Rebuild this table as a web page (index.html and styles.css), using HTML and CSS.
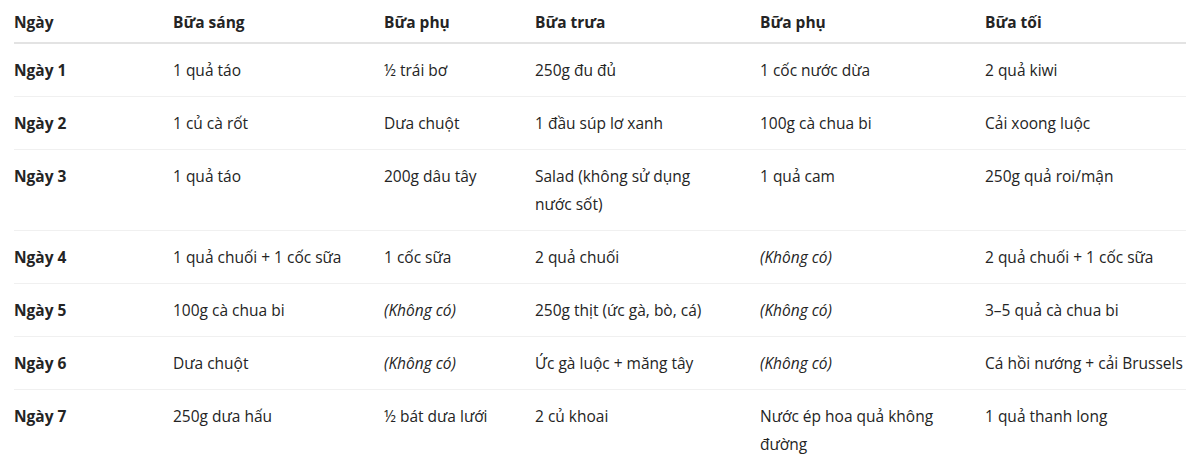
FILE: index.html
```html
<!DOCTYPE html>
<html lang="vi">
<head>
<meta charset="utf-8">
<link rel="stylesheet" href="styles.css">
</head>
<body>
<table class="menu">
  <colgroup>
    <col class="c1"><col class="c2"><col class="c3"><col class="c4"><col class="c5"><col class="c6">
  </colgroup>
  <thead>
    <tr><th>Ngày</th><th>Bữa sáng</th><th>Bữa phụ</th><th>Bữa trưa</th><th>Bữa phụ</th><th>Bữa tối</th></tr>
  </thead>
  <tbody>
    <tr><td class="day">Ngày 1</td><td>1 quả táo</td><td>½ trái bơ</td><td>250g đu đủ</td><td>1 cốc nước dừa</td><td>2 quả kiwi</td></tr>
    <tr><td class="day">Ngày 2</td><td>1 củ cà rốt</td><td>Dưa chuột</td><td>1 đầu súp lơ xanh</td><td>100g cà chua bi</td><td>Cải xoong luộc</td></tr>
    <tr><td class="day">Ngày 3</td><td>1 quả táo</td><td>200g dâu tây</td><td>Salad (không sử dụng nước sốt)</td><td>1 quả cam</td><td>250g quả roi/mận</td></tr>
    <tr><td class="day">Ngày 4</td><td>1 quả chuối + 1 cốc sữa</td><td>1 cốc sữa</td><td>2 quả chuối</td><td><em>(Không có)</em></td><td>2 quả chuối + 1 cốc sữa</td></tr>
    <tr><td class="day">Ngày 5</td><td>100g cà chua bi</td><td><em>(Không có)</em></td><td>250g thịt (ức gà, bò, cá)</td><td><em>(Không có)</em></td><td>3–5 quả cà chua bi</td></tr>
    <tr><td class="day">Ngày 6</td><td>Dưa chuột</td><td><em>(Không có)</em></td><td>Ức gà luộc + măng tây</td><td><em>(Không có)</em></td><td>Cá hồi nướng + cải Brussels</td></tr>
    <tr><td class="day">Ngày 7</td><td>250g dưa hấu</td><td>½ bát dưa lưới</td><td>2 củ khoai</td><td>Nước ép hoa quả không đường</td><td>1 quả thanh long</td></tr>
  </tbody>
</table>
</body>
</html>
```
FILE: styles.css
```css
html, body {
  margin: 0;
  padding: 0;
  background: #ffffff;
}
body {
  font-family: "Open Sans", "Noto Sans", sans-serif;
  font-size: 15.5px;
  color: #242424;
}
.menu {
  margin-left: 14px;
  width: 1172px;
  table-layout: fixed;
  border-collapse: collapse;
}
.c1 { width: 159px; }
.c2 { width: 211px; }
.c3 { width: 151px; }
.c4 { width: 225px; }
.c5 { width: 225px; }
.c6 { width: 201px; }
.menu th {
  text-align: left;
  font-weight: 700;
  line-height: 28px;
  padding: 8px 32px 6px 0;
  border-bottom: 2px solid #e3e3e3;
  vertical-align: top;
}
.menu td {
  line-height: 28px;
  padding: 12px 32px 12px 0;
  border-bottom: 1px solid #f0f0f0;
  vertical-align: top;
}
.menu th:last-child,
.menu td:last-child {
  padding-right: 0;
}
.menu td.day {
  font-weight: 700;
}
.menu em {
  font-style: italic;
}
```
